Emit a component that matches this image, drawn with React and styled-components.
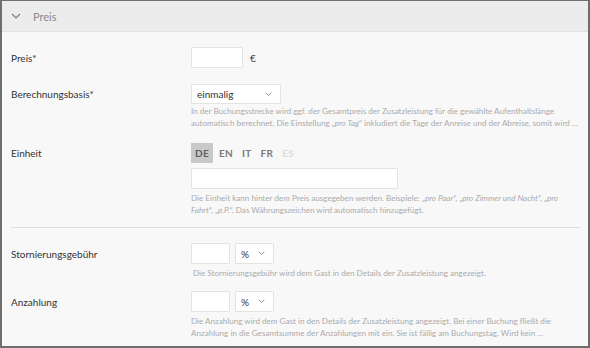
import styled, { createGlobalStyle } from "styled-components";

const Global = createGlobalStyle`
  html, body {
    margin: 0;
    padding: 0;
    background: #f7f7f7;
  }
  body {
    font-family: Lato, "Open Sans", sans-serif;
  }
`;

const Frame = styled.div`
  box-sizing: border-box;
  width: 590px;
  height: 348px;
  border: 2px solid #6e6e6e;
  border-top-width: 1px;
  background: #f8f8f8;
  overflow: hidden;
`;

const Header = styled.div`
  display: flex;
  align-items: center;
  gap: 12px;
  height: 30px;
  padding-left: 9px;
  background: #ececec;
  border-bottom: 1px solid #e2e2e2;
  color: #8a8a8a;
  font-size: 11px;
`;

const Body = styled.div`
  display: flex;
  flex-direction: column;
  padding: 15px 8px 0 9px;
`;

const Row = styled.div`
  display: grid;
  grid-template-columns: 180px 1fr;
  margin-bottom: ${(p) => p.$mb || 0}px;
`;

const Label = styled.div`
  font-size: 10px;
  color: #333;
  height: ${(p) => p.$h || 21}px;
  display: flex;
  align-items: center;
`;

const Control = styled.div`
  display: flex;
  flex-direction: column;
  align-items: flex-start;
`;

const Inline = styled.div`
  display: flex;
  align-items: center;
  gap: ${(p) => p.$gap || 5}px;
`;

const Input = styled.div`
  box-sizing: border-box;
  width: ${(p) => p.$w}px;
  height: ${(p) => p.$h || 21}px;
  background: #fff;
  border: 1px solid #e3e3e3;
  border-radius: 1px;
`;

const Unit = styled.span`
  font-size: 10px;
  color: #444;
  margin-left: 2px;
`;

const Select = styled.div`
  box-sizing: border-box;
  display: flex;
  align-items: center;
  justify-content: space-between;
  width: ${(p) => p.$w}px;
  height: ${(p) => p.$h || 21}px;
  padding: 0 8px 0 5px;
  background: #fff;
  border: 1px solid #e3e3e3;
  border-radius: 1px;
  font-size: 10px;
  color: #333;
`;

const Help = styled.div`
  width: 394px;
  margin-top: ${(p) => p.$mt || 1}px;
  padding-left: ${(p) => p.$pl || 0}px;
  font-size: 8.1px;
  line-height: 12px;
  color: #ababab;

  em {
    font-style: italic;
  }
`;

const Tabs = styled.div`
  display: flex;
  align-items: center;
  margin-bottom: 5px;
`;

const Tab = styled.div`
  height: 20px;
  padding: 0 4px;
  display: flex;
  align-items: center;
  font-size: 10px;
  font-weight: 700;
  letter-spacing: 0.3px;
  color: ${(p) => (p.$disabled ? "#dcdcdc" : p.$active ? "#5e5e5e" : "#7a7a7a")};
  background: ${(p) => (p.$active ? "#c9c9c9" : "transparent")};
  margin-right: ${(p) => (p.$active ? 2 : 1)}px;
`;

const Divider = styled.hr`
  border: 0;
  border-top: 1px solid #dedede;
  margin: 11px 0 15px 0;
  width: 569px;
`;

const Chevron = ({ size = 8, color = "#777", stroke = 1.3 }) => (
  <svg width={size} height={size * 0.6} viewBox="0 0 10 6" fill="none">
    <path d="M1 1l4 4 4-4" stroke={color} strokeWidth={stroke} />
  </svg>
);

export default function App() {
  return (
    <>
      <Global />
      <Frame>
        <Header>
          <Chevron size={10} color="#7a7a7a" stroke={1.1} />
          <span>Preis</span>
        </Header>
        <Body>
          <Row $mb={16}>
            <Label>Preis*</Label>
            <Control>
              <Inline $gap={5}>
                <Input $w={52} />
                <Unit>€</Unit>
              </Inline>
            </Control>
          </Row>

          <Row $mb={14}>
            <Label $h={20}>Berechnungsbasis*</Label>
            <Control>
              <Select $w={90} $h={20}>
                einmalig
                <Chevron size={7} color="#888" />
              </Select>
              <Help>
                In der Buchungsstrecke wird ggf. der Gesamtpreis der
                Zusatzleistung für die gewählte Aufenthaltslänge automatisch
                berechnet. Die Einstellung „<em>pro Tag</em>“ inkludiert die
                Tage der Anreise und der Abreise, somit wird&nbsp;…
              </Help>
            </Control>
          </Row>

          <Row>
            <Label $h={20}>Einheit</Label>
            <Control>
              <Tabs>
                <Tab $active>DE</Tab>
                <Tab>EN</Tab>
                <Tab>IT</Tab>
                <Tab>FR</Tab>
                <Tab $disabled>ES</Tab>
              </Tabs>
              <Input $w={207} />
              <Help $mt={3}>
                Die Einheit kann hinter dem Preis ausgegeben werden. Beispiele:{" "}
                „<em>pro Paar</em>“, „<em>pro Zimmer und Nacht</em>“, „<em>pro</em>
                <br />
                <em>Fahrt</em>“, „<em>p.P.</em>“. Das Währungszeichen wird
                automatisch hinzugefügt.
              </Help>
            </Control>
          </Row>

          <Divider />

          <Row $mb={12}>
            <Label>Stornierungsgebühr</Label>
            <Control>
              <Inline $gap={5}>
                <Input $w={39} />
                <Select $w={39}>
                  %
                  <Chevron size={7} color="#888" />
                </Select>
              </Inline>
              <Help $mt={3} $pl={2}>
                Die Stornierungsgebühr wird dem Gast in den Details der
                Zusatzleistung angezeigt.
              </Help>
            </Control>
          </Row>

          <Row>
            <Label>Anzahlung</Label>
            <Control>
              <Inline $gap={5}>
                <Input $w={39} />
                <Select $w={39}>
                  %
                  <Chevron size={7} color="#888" />
                </Select>
              </Inline>
              <Help $mt={3}>
                Die Anzahlung wird dem Gast in den Details der Zusatzleistung
                angezeigt. Bei einer Buchung fließt die
                <br />
                Anzahlung in die Gesamtsumme der Anzahlungen mit ein. Sie ist
                fällig am Buchungstag. Wird kein&nbsp;…
              </Help>
            </Control>
          </Row>
        </Body>
      </Frame>
    </>
  );
}
